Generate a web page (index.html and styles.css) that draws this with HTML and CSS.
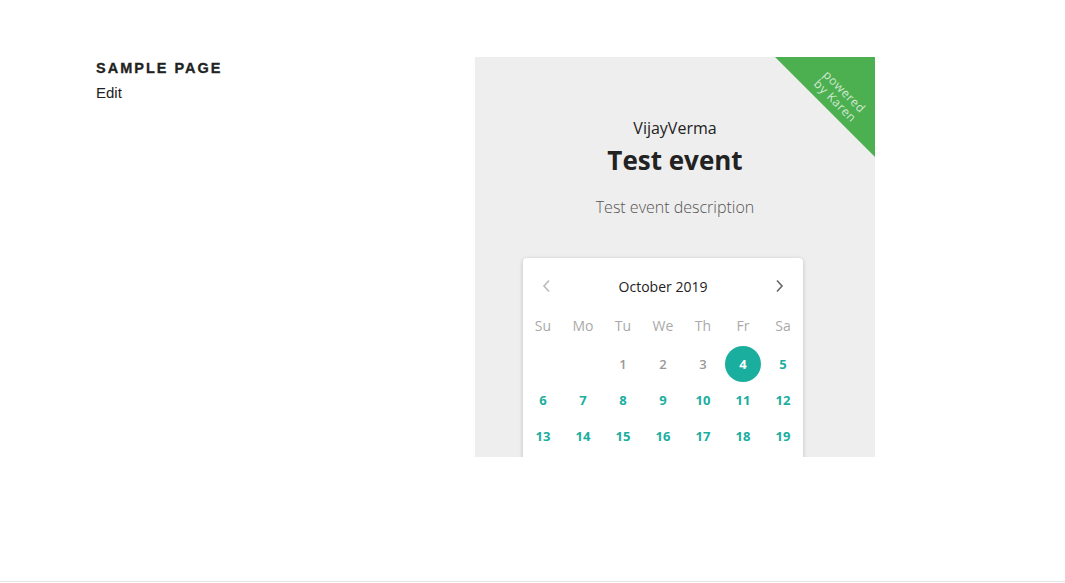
FILE: index.html
```html
<!DOCTYPE html>
<html>
<head>
<meta charset="utf-8">
<link rel="stylesheet" href="styles.css">
</head>
<body>
<div class="page">
  <div class="left">
    <h2 class="title">Sample Page</h2>
    <a class="edit">Edit</a>
  </div>
  <div class="frame">
    <div class="ribbon"></div>
    <div class="ribbon-text">powered<br>by Karen</div>
    <div class="name">VijayVerma</div>
    <h1 class="event">Test event</h1>
    <p class="desc">Test event description</p>
    <div class="cal">
      <div class="cal-head">
        <svg class="chev prev" width="10" height="14" viewBox="0 0 10 14"><polyline points="7,1.5 2,7 7,12.5" fill="none" stroke="currentColor" stroke-width="1.6"/></svg>
        <span class="month">October 2019</span>
        <svg class="chev next" width="10" height="14" viewBox="0 0 10 14"><polyline points="3,1.5 8,7 3,12.5" fill="none" stroke="currentColor" stroke-width="1.6"/></svg>
      </div>
      <div class="grid wk">
        <span>Su</span><span>Mo</span><span>Tu</span><span>We</span><span>Th</span><span>Fr</span><span>Sa</span>
      </div>
      <div class="grid days">
        <span></span><span></span><span class="off">1</span><span class="off">2</span><span class="off">3</span><span class="sel"><b>4</b></span><span>5</span>
        <span>6</span><span>7</span><span>8</span><span>9</span><span>10</span><span>11</span><span>12</span>
        <span>13</span><span>14</span><span>15</span><span>16</span><span>17</span><span>18</span><span>19</span>
      </div>
    </div>
  </div>
</div>
<div class="rule"></div>
</body>
</html>
```
FILE: styles.css
```css
html, body { margin: 0; padding: 0; background: #fff; }
body { font-family: "Open Sans", "Liberation Sans", sans-serif; }
.page {
  height: 581px;
  box-sizing: border-box;
  padding: 57px 0 0 96px;
  display: flex;
  align-items: flex-start;
}
.left { width: 379px; }
.title {
  margin: 2px 0 0;
  font-family: "Liberation Sans", Arial, sans-serif;
  font-weight: 900;
  font-size: 14.5px;
  line-height: 18px;
  letter-spacing: 2px;
  text-transform: uppercase;
  color: #222;
  -webkit-text-stroke: 0.3px #222;
}
.edit {
  display: block;
  margin-top: 7px;
  font-family: "Liberation Sans", Arial, sans-serif;
  font-size: 15px;
  line-height: 18px;
  color: #222;
}
.frame {
  position: relative;
  width: 400px;
  height: 400px;
  background: #eeeeee;
  overflow: hidden;
  text-align: center;
  color: #222;
}
.ribbon {
  position: absolute;
  top: 0; right: 0;
  width: 100px; height: 100px;
  background: #4caf50;
  clip-path: polygon(0 0, 100% 0, 100% 100%);
}
.ribbon-text {
  position: absolute;
  top: 26px; right: -5px;
  width: 80px;
  font-size: 12px;
  line-height: 13px;
  letter-spacing: 0.6px;
  color: rgba(255,255,255,0.75);
  text-align: center;
  transform: rotate(45deg);
}
.name {
  margin-top: 60px;
  font-size: 16px;
  line-height: 22px;
}
.event {
  margin: 5px 0 0;
  font-size: 26px;
  line-height: 32px;
  font-weight: 700;
  color: #222;
}
.desc {
  margin: 20px 0 0;
  font-size: 16px;
  line-height: 22px;
  font-weight: 300;
  color: #555;
}
.cal {
  margin: 40px 0 0 48px;
  width: 280px;
  background: #fff;
  border-radius: 4px;
  box-shadow: 0 1px 4px rgba(0,0,0,0.2);
}
.cal-head {
  height: 56px;
  display: flex;
  align-items: center;
  justify-content: space-between;
  padding: 0 19px;
}
.month { font-size: 14px; color: #222; }
.chev.prev { color: #bbb; }
.chev.next { color: #666; }
.grid {
  display: grid;
  grid-template-columns: repeat(7, 40px);
}
.wk span {
  height: 24px;
  line-height: 24px;
  font-size: 14px;
  color: #aaa;
}
.days { margin-top: 8px; padding-bottom: 20px; }
.days span {
  height: 36px;
  display: flex;
  align-items: center;
  justify-content: center;
  font-size: 13px;
  font-weight: 700;
  color: #1aae9f;
}
.days span.off { color: #999; font-weight: 600; }
.days span.sel b {
  width: 36px; height: 36px;
  border-radius: 50%;
  background: #1aae9f;
  color: #fff;
  display: flex;
  align-items: center;
  justify-content: center;
  font-weight: 700;
}
.rule { border-top: 1px solid #e6e6e6; height: 1px; }
```
